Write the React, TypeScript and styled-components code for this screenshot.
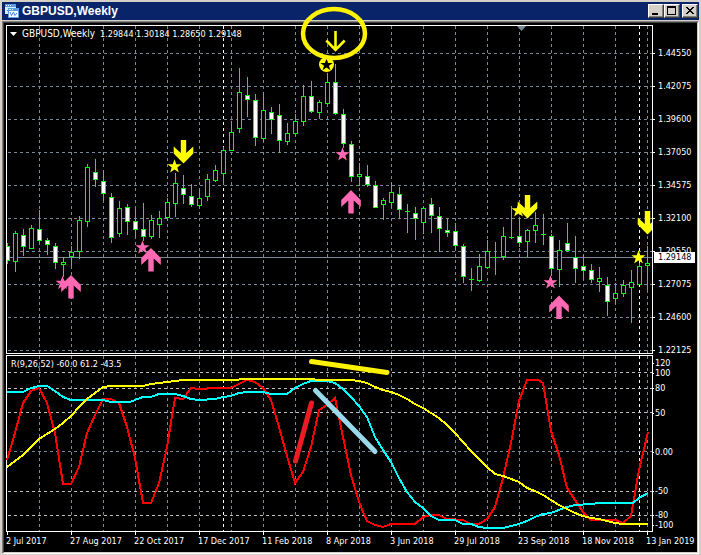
import React from "react";
import styled, { createGlobalStyle, css } from "styled-components";

const GREEN = "#00ff00";
const GRID = "#778899";
const LEVEL = "#c0c0c0";
const YELLOW = "#ffff00";
const PINK = "#ff69b4";
const MARKER = "#fff200";

const PLOT_WIDTH = 645;
const PRICE_TOP = 26;
const PRICE_HEIGHT = 327;
const OSC_TOP = 356;
const OSC_HEIGHT = 175;

/* [high, body top, body bottom, low, filled] for each weekly bar, 8px apart */
type Bar = [number, number, number, number, 0 | 1];
const bars: Bar[] = [
  [243, 246, 261, 264, 1], [231, 233, 262, 272, 0], [229, 235, 247, 256, 1], [225, 228, 249, 249, 0],
  [210, 229, 241, 244, 1], [238, 240, 245, 255, 1], [243, 246, 263, 269, 1], [257, 262, 265, 277, 0],
  [246, 252, 257, 266, 0], [216, 220, 252, 259, 0], [164, 167, 222, 227, 0], [159, 172, 180, 187, 1],
  [170, 181, 194, 201, 1], [193, 197, 238, 243, 1], [201, 208, 234, 237, 0], [204, 207, 222, 235, 1],
  [209, 221, 230, 237, 1], [203, 229, 237, 241, 1], [215, 220, 237, 239, 0], [211, 218, 225, 238, 0],
  [198, 202, 218, 221, 0], [173, 183, 204, 217, 0], [175, 188, 195, 204, 1], [184, 196, 205, 207, 1],
  [190, 198, 206, 207, 0], [174, 179, 197, 201, 0], [165, 170, 181, 182, 0], [147, 150, 174, 185, 0],
  [121, 132, 151, 151, 0], [68, 92, 129, 133, 0], [77, 95, 100, 117, 1], [94, 100, 138, 146, 1],
  [92, 110, 139, 142, 0], [107, 112, 120, 134, 1], [104, 115, 141, 153, 1], [123, 133, 142, 145, 0],
  [114, 121, 134, 136, 0], [85, 96, 122, 126, 0], [81, 96, 112, 113, 1], [100, 102, 113, 119, 0],
  [73, 82, 104, 105, 0], [64, 82, 114, 115, 1], [109, 114, 144, 148, 1], [141, 144, 177, 182, 1],
  [163, 174, 177, 186, 0], [165, 176, 185, 187, 1], [181, 185, 208, 208, 1], [198, 200, 205, 220, 0],
  [183, 192, 203, 208, 0], [187, 194, 210, 219, 1], [204, 211, 212, 233, 0], [207, 213, 219, 240, 1],
  [207, 208, 223, 234, 0], [198, 204, 216, 233, 1], [207, 216, 229, 252, 1], [218, 230, 233, 237, 1],
  [223, 231, 246, 250, 1], [244, 246, 277, 283, 1], [268, 279, 280, 291, 0], [254, 266, 281, 282, 0],
  [240, 251, 268, 269, 0], [242, 257, 258, 275, 0], [227, 236, 257, 260, 0], [206, 237, 238, 239, 0],
  [217, 236, 243, 247, 1], [229, 230, 242, 257, 0], [212, 225, 231, 243, 0], [214, 234, 235, 245, 0],
  [234, 236, 269, 276, 1], [240, 250, 270, 287, 0], [223, 243, 251, 252, 1], [236, 257, 269, 283, 1],
  [255, 266, 271, 279, 1], [264, 270, 280, 283, 1], [267, 278, 282, 292, 0], [277, 285, 302, 316, 1],
  [283, 293, 299, 304, 0], [280, 285, 294, 297, 0], [270, 282, 288, 323, 0], [263, 266, 285, 285, 0],
  [246, 263, 266, 290, 0],
];

const fastLine =
  "0,460 8,433 16,403 24,391 32,388 40,403 48,433 56,484 64,484 72,467 80,433 88,415 96,399 104,399 112,403 120,427 128,458 136,503 144,503 152,483 160,447 168,398 176,399 184,388 192,389 208,388 224,388 232,384 240,380 248,382 256,388 264,400 272,427 280,456 288,483 296,472 304,447 312,410 320,405 328,398 336,437 344,475 352,502 360,521 368,525 376,527 384,524 408,524 416,517 424,515 432,515 440,519 456,520 464,524 472,524 480,519 488,507 496,478 504,443 512,401 520,380 531,380 536,383 544,431 552,455 560,488 568,500 576,512 584,520 608,520 616,523 624,516 632,470 641,432";
const middleLine =
  "0,392 16,392 24,388 32,386 40,386 48,391 56,397 64,400 96,400 104,402 123,402 128,400 136,397 144,397 152,394 168,394 176,396 184,399 192,400 208,399 216,397 224,396 232,393 240,392 256,392 264,394 280,394 288,388 296,384 304,381 320,381 328,383 336,389 344,397 352,406 360,417 368,437 376,450 384,462 392,478 400,492 408,502 416,508 424,516 432,520 448,520 456,524 464,524 472,527 480,528 496,528 504,526 512,524 520,521 528,517 536,514 544,513 552,510 560,507 568,505 584,504 592,503 626,503 632,498 641,493";
const slowLine =
  "0,467 8,461 16,455 24,447 32,439 40,434 48,429 56,423 64,416 72,407 80,399 88,393 96,387 104,386 136,386 144,384 160,382 176,380 230,380 234,379 304,379 312,380 344,380 352,381 360,383 368,387 376,390 384,392 392,395 400,399 408,404 416,408 424,413 432,418 440,425 448,433 456,442 464,451 472,459 480,467 488,474 496,476 504,479 512,482 520,488 528,491 536,495 544,500 552,505 560,509 568,513 576,516 584,518 592,519 600,521 608,523 616,524 641,524";

const priceLevels = ["1.44550", "1.42075", "1.39600", "1.37050", "1.34575", "1.32100", "1.29550", "1.27075", "1.24600", "1.22125"];
const oscLevels: [string, number][] = [
  ["120", 0], ["100", 0], ["80", 5], ["50", 15], ["0.00", 29], ["-50", 29], ["-80", 14], ["-100", 0],
];
const dates = ["2 Jul 2017", "27 Aug 2017", "22 Oct 2017", "17 Dec 2017", "11 Feb 2018", "8 Apr 2018", "3 Jun 2018", "29 Jul 2018", "23 Sep 2018", "18 Nov 2018", "13 Jan 2019"];

const GlobalStyle = createGlobalStyle`
  * { box-sizing: border-box; }
  body { margin: 0; background: #d4d0c8; }
`;

const Window = styled.main`
  display: flex;
  flex-direction: column;
  gap: 1px;
  padding: 2px;
  background: #d4d0c8;
  font-family: "DejaVu Sans Condensed", "DejaVu Sans", sans-serif;
`;

const TitleBar = styled.header`
  display: flex;
  align-items: center;
  height: 18px;
  padding: 0 1px 0 3px;
  background: #0a246a;
  color: #fff;
`;

const Title = styled.h1`
  flex: 1;
  margin: 0 0 0 3px;
  font: bold 12px/18px "Liberation Sans", Arial, sans-serif;
`;

const CaptionButton = styled.button<{ $apart?: boolean }>`
  display: flex;
  width: 16px;
  height: 14px;
  margin-left: ${(p) => (p.$apart ? 2 : 0)}px;
  padding: 0;
  border: 1px solid;
  border-color: #fff #404040 #404040 #fff;
  background: #d4d0c8;
  box-shadow: inset -1px -1px #808080;
`;

const Well = styled.section`
  border: 1px solid;
  border-color: #808080 #fff #fff #808080;
`;

const Chart = styled.div`
  display: flex;
  flex-direction: column;
  gap: 1px;
  padding: 2px 0 0 2px;
  border: 1px solid;
  border-color: #404040 #d4d0c8 #d4d0c8 #404040;
  background: #000;
  color: #fff;
  font-size: 9px;
`;

const Panel = styled.div`
  display: grid;
  grid-template-columns: minmax(0, 1fr) 44px;
`;

const Plot = styled.div`
  position: relative;
  border: 1px solid #fff;
`;

const PlotSvg = styled.svg<{ $height: number }>`
  display: block;
  width: 100%;
  height: ${(p) => p.$height}px;
  overflow: visible;
`;

const Caption = styled.div<{ $large?: boolean }>`
  position: absolute;
  top: 2px;
  left: ${(p) => (p.$large ? 3 : 4)}px;
  display: flex;
  align-items: center;
  line-height: 12px;
  white-space: pre;
  ${(p) => p.$large && css`gap: 5px;`}
`;

const Symbol = styled.span`
  font-size: 10px;
`;

const Axis = styled.div<{ $dense?: boolean }>`
  position: relative;
  display: flex;
  flex-direction: column;
  gap: ${(p) => (p.$dense ? 0 : 22)}px;
  height: 0;
  padding-top: ${(p) => (p.$dense ? 3 : 23)}px;
`;

const Level = styled.div<{ $space?: number; $dense?: boolean }>`
  display: flex;
  align-items: center;
  flex: none;
  gap: ${(p) => (p.$dense ? 1 : 3)}px;
  margin-top: ${(p) => p.$space ?? 0}px;
  line-height: ${(p) => (p.$dense ? 10 : 11)}px;
  &::before {
    content: "";
    width: ${(p) => (p.$dense ? 1 : 2)}px;
    height: 1px;
    background: #fff;
  }
`;

const CurrentPrice = styled.div`
  position: absolute;
  top: 227px;
  left: 1px;
  width: 41px;
  padding-left: 4px;
  background: #fff;
  color: #000;
  line-height: 11px;
`;

const TimeAxis = styled.div`
  display: flex;
  height: 20px;
  margin: -1px 44px 0 0;
`;

const DateLabel = styled.time`
  flex: 0 0 calc(6400% / 647);
  line-height: 12px;
  white-space: nowrap;
  &::before {
    content: "";
    display: block;
    width: 1px;
    height: 3px;
    margin-left: 1px;
    background: #fff;
  }
`;

function Candles() {
  return (
    <>
      {bars.map(([high, top, bottom, low, filled], i) => {
        const x = i * 8 + 0.5;
        const flat = bottom - top < 2;
        return (
          <g key={i} stroke={GREEN}>
            <path d={`M${x} ${high}V${low}`} />
            {flat ? (
              <path d={`M${x - 2.5} ${top + 0.5}h5`} />
            ) : (
              <rect x={x - 2} y={top + 0.5} width="4" height={bottom - top - 1} fill={filled ? "#fff" : "#000"} />
            )}
          </g>
        );
      })}
    </>
  );
}

function Verticals({ top, height }: { top: number; height: number }) {
  const columns = Array.from({ length: 20 }, (_, i) => 32.5 + i * 32);
  return (
    <g strokeDasharray="3 3" shapeRendering="crispEdges">
      {columns.map((x) => (
        <path key={x} d={`M${x} ${top}v${height}`} stroke={GRID} />
      ))}
      {[216.5, 632.5].map((x) => (
        <path key={x} d={`M${x} ${top}v${height}`} stroke="#fff" />
      ))}
    </g>
  );
}

function Horizontal({ y, color = GRID }: { y: number; color?: string }) {
  return <path d={`M1 ${y + 0.5}H${PLOT_WIDTH}`} stroke={color} strokeDasharray="3 3" shapeRendering="crispEdges" />;
}

const STAR = "M0-7.3 1.8-2.3H7L2.8.9 4.4 6 0 2.9-4.4 6-2.8.9-7-2.3H-1.8Z";
function Star({ x, y, color }: { x: number; y: number; color: string }) {
  return <path d={STAR} transform={`translate(${x} ${y})`} fill={color} />;
}

function Arrow({ x, y, color, up }: { x: number; y: number; color: string; up?: boolean }) {
  return (
    <path
      d="M-2.7-23.5H2.7V-10.5L9.8-17V-10L0 0-9.8-10V-17L-2.7-10.5Z"
      transform={`translate(${x} ${y})${up ? " scale(1 -1)" : ""}`}
      fill={color}
    />
  );
}

function PricePlot() {
  return (
    <PlotSvg
      $height={PRICE_HEIGHT}
      viewBox={`0 ${PRICE_TOP} ${PLOT_WIDTH} ${PRICE_HEIGHT}`}
      preserveAspectRatio="none"
      fill="none"
      role="img"
      aria-label="GBPUSD weekly candles"
    >
      <clipPath id="price-area">
        <rect x="0" y={PRICE_TOP} width={PLOT_WIDTH} height={PRICE_HEIGHT} />
      </clipPath>
      <g clipPath="url(#price-area)">
        <Verticals top={PRICE_TOP} height={PRICE_HEIGHT} />
        {priceLevels.map((level, i) => (
          <Horizontal key={level} y={53 + i * 33} />
        ))}
        <path d="M0 257.5H645" stroke={GRID} shapeRendering="crispEdges" />
        <path d="M510 26h9l-4.500 5z" fill={GRID} />
        <g shapeRendering="crispEdges">
          <Candles />
        </g>
        <Star x={167.5} y={166.5} color={YELLOW} />
        <Star x={511.5} y={210.5} color={YELLOW} />
        <Star x={631.5} y={257.5} color={YELLOW} />
        <Star x={55.500} y={283} color={PINK} />
        <Star x={135.500} y={247.5} color={PINK} />
        <Star x={335.500} y={154.5} color={PINK} />
        <Star x={543.500} y={282.5} color={PINK} />
        <Arrow x={176.5} y={163.5} color={YELLOW} />
        <Arrow x={520.5} y={218.5} color={YELLOW} />
        <Arrow x={640.5} y={234.5} color={YELLOW} />
        <Arrow x={64} y={275} color={PINK} up />
        <Arrow x={144} y={248} color={PINK} up />
        <Arrow x={344} y={190} color={PINK} up />
        <Arrow x={552} y={295.5} color={PINK} up />
        <circle cx="319.5" cy="64.500" r="7.5" fill={YELLOW} />
        <path d={STAR} transform="translate(319.500 65) scale(.88)" fill="#000" />
        <path d="M328.500 31V50M319.300 40.500l9.200 9.500 9.200-9.500" stroke={YELLOW} strokeWidth="2.600" />
      </g>
      <ellipse cx="327" cy="33.500" rx="31" ry="24.500" stroke={MARKER} strokeWidth="4.500" />
    </PlotSvg>
  );
}

function OscillatorPlot() {
  return (
    <PlotSvg
      $height={OSC_HEIGHT}
      viewBox={`0 ${OSC_TOP} ${PLOT_WIDTH} ${OSC_HEIGHT}`}
      preserveAspectRatio="none"
      fill="none"
      role="img"
      aria-label="R oscillator"
    >
      <Verticals top={OSC_TOP} height={OSC_HEIGHT} />
      {[372, 388, 412, 491, 515].map((y) => (
        <Horizontal key={y} y={y} color={LEVEL} />
      ))}
      <Horizontal y={451} />
      <g strokeWidth="2" shapeRendering="crispEdges">
        <polyline points={fastLine} stroke="#ff0000" />
        <polyline points={middleLine} stroke="#00ffff" />
        <polyline points={slowLine} stroke={YELLOW} />
      </g>
      <g strokeWidth="5" strokeLinecap="round">
        <path d="M304.500 361.500 380 372.500" stroke={MARKER} />
        <path d="M304.500 403 288.500 461" stroke="#ed1c24" />
        <path d="M308.500 390.500 368 451.500" stroke="#99d9ea" />
      </g>
    </PlotSvg>
  );
}

export default function App() {
  return (
    <>
      <GlobalStyle />
      <Window>
        <TitleBar>
          <svg width="14" height="14" viewBox="0 0 14 14" fill="none" aria-hidden="true">
            <path d="M0 0h11v10H0z" fill="#d8ecff" />
            <path d="M0 0h11v3H0z" fill="#5b9bf0" />
            <path d="M1 1.500h1M3 1.500h1M5 1.500h1" stroke="#fff" />
            <path d="m2 7 2-2 2 2" stroke="#3f82e8" />
            <path d="M3 4h11v10H3z" fill="#5b9bf0" />
            <path d="M4 7h9v6H4z" fill="#fff" />
            <path d="M4 5.500h2M7 5.500h1" stroke="#d8ecff" />
            <path d="m5 8 1.500 3.500L8.500 8l1.500 3.500L12 9" stroke="#3f82e8" />
          </svg>
          <Title>GBPUSD,Weekly</Title>
          <CaptionButton aria-label="Minimize">
            <svg width="14" height="12" viewBox="0 0 14 12" shapeRendering="crispEdges">
              <path d="M3 8h6v2H3z" />
            </svg>
          </CaptionButton>
          <CaptionButton aria-label="Maximize">
            <svg width="14" height="12" viewBox="0 0 14 12" shapeRendering="crispEdges" fillRule="evenodd">
              <path d="M2 1h9v9H2zM3 3v6h7V3z" />
            </svg>
          </CaptionButton>
          <CaptionButton aria-label="Close" $apart>
            <svg width="14" height="12" viewBox="0 0 14 12" shapeRendering="crispEdges">
              <path d="M3 2h2v1h1v1h2V3h1V2h2v1h-1v1H9v1H8v1h1v1h1v1h1v1H9V8H8V7H6v1H5v1H3V8h1V7h1V6h1V5H5V4H4V3H3z" />
            </svg>
          </CaptionButton>
        </TitleBar>
        <Well>
          <Chart>
            <Panel>
              <Plot>
                <PricePlot />
                <Caption $large>
                  <svg width="7" height="4" viewBox="0 0 7 4" aria-hidden="true">
                    <path d="M0 0h7L3.500 4z" fill="#fff" />
                  </svg>
                  <Symbol>GBPUSD,Weekly</Symbol>
                  <span>1.29844 1.30184 1.28650 1.29148</span>
                </Caption>
              </Plot>
              <Axis>
                {priceLevels.map((level) => (
                  <Level key={level}>{level}</Level>
                ))}
                <CurrentPrice>1.29148</CurrentPrice>
              </Axis>
            </Panel>
            <Panel>
              <Plot>
                <OscillatorPlot />
                <Caption>R(9,26,52) -60.0 61.2 -43.5</Caption>
              </Plot>
              <Axis $dense>
                {oscLevels.map(([label, space]) => (
                  <Level key={label} $space={space} $dense>
                    {label}
                  </Level>
                ))}
              </Axis>
            </Panel>
            <TimeAxis>
              {dates.map((date) => (
                <DateLabel key={date}>{date}</DateLabel>
              ))}
            </TimeAxis>
          </Chart>
        </Well>
      </Window>
    </>
  );
}
